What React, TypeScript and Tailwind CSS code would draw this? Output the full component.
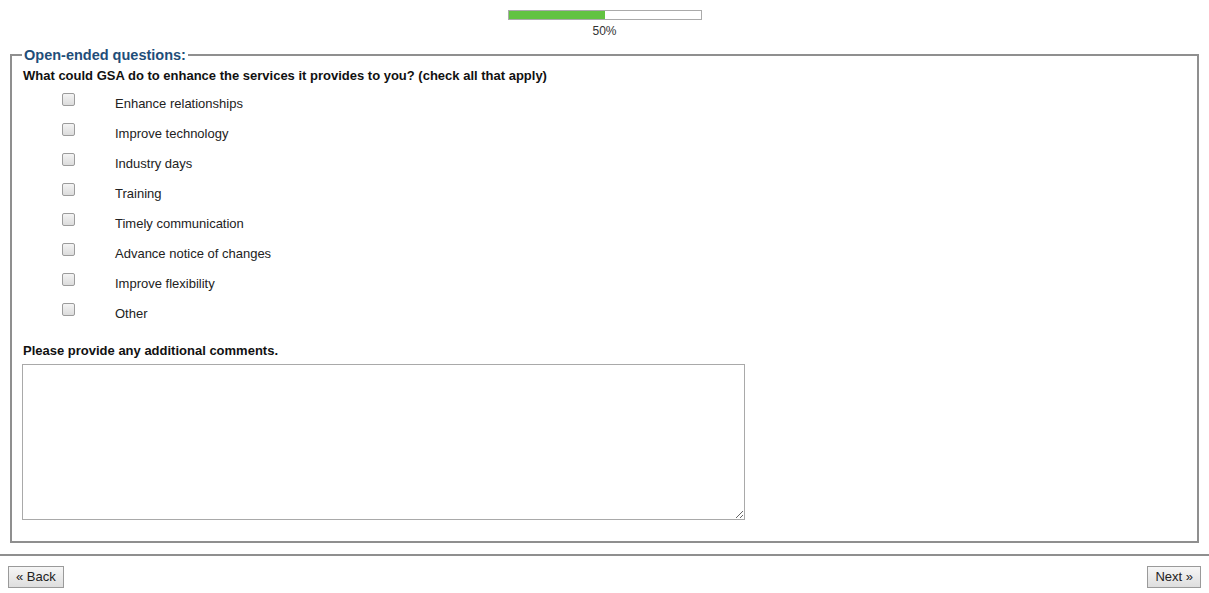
const options = [
  'Enhance relationships',
  'Improve technology',
  'Industry days',
  'Training',
  'Timely communication',
  'Advance notice of changes',
  'Improve flexibility',
  'Other',
];

function Checkbox() {
  return (
    <input
      type="checkbox"
      className="mt-[6px] h-[13px] w-[13px] appearance-none rounded-[2px] border border-[#9c9c9c] bg-gradient-to-b from-[#f4f4f4] to-[#dcdcdc]"
    />
  );
}

export default function App() {
  return (
    <div className="min-h-[593px] bg-white font-['Liberation_Sans',Arial,sans-serif] text-[13px] text-[#222]">
      <div className="flex flex-col items-center pt-[10px]">
        <div className="h-[10px] w-[194px] border border-[#aaa] bg-white">
          <div className="h-full w-1/2 bg-[#62c341]" />
        </div>
        <div className="mt-[4px] text-[12px] leading-[14px] text-[#333]">50%</div>
      </div>

      <fieldset className="mx-[10px] mt-[9px] border-2 border-[#8f8f8f] pb-[21px] pl-[11px] pr-[10px]">
        <legend className="-ml-[1px] px-[2px] text-[14.5px] leading-[16px] font-bold text-[#1f4e79]">
          Open-ended questions:
        </legend>
        <div className="mt-[5px] font-bold leading-[16px] text-[#111]">
          What could GSA do to enhance the services it provides to you? (check all that apply)
        </div>
        <div className="mt-[3px] flex flex-col">
          {options.map((o) => (
            <label key={o} className="flex h-[30px] items-start pl-[39px]">
              <Checkbox />
              <span className="ml-[40px] mt-[9px] leading-[15px]">{o}</span>
            </label>
          ))}
        </div>
        <div className="mt-[16px] font-bold leading-[16px] text-[#111]">
          Please provide any additional comments.
        </div>
        <textarea className="-ml-[1px] mt-[5px] block h-[156px] w-[723px] border border-[#a9a9a9] bg-white" />
      </fieldset>

      <div className="mt-[11px] border-t-2 border-[#8f8f8f]" />

      <div className="flex justify-between px-[8px] pt-[10px]">
        <button className="h-[22px] border border-[#9a9a9a] bg-gradient-to-b from-[#f6f6f6] to-[#dedede] px-[7px] text-[13px] leading-[20px] text-[#222]">
          « Back
        </button>
        <button className="h-[22px] border border-[#9a9a9a] bg-gradient-to-b from-[#f6f6f6] to-[#dedede] px-[7px] text-[13px] leading-[20px] text-[#222]">
          Next »
        </button>
      </div>
    </div>
  );
}
